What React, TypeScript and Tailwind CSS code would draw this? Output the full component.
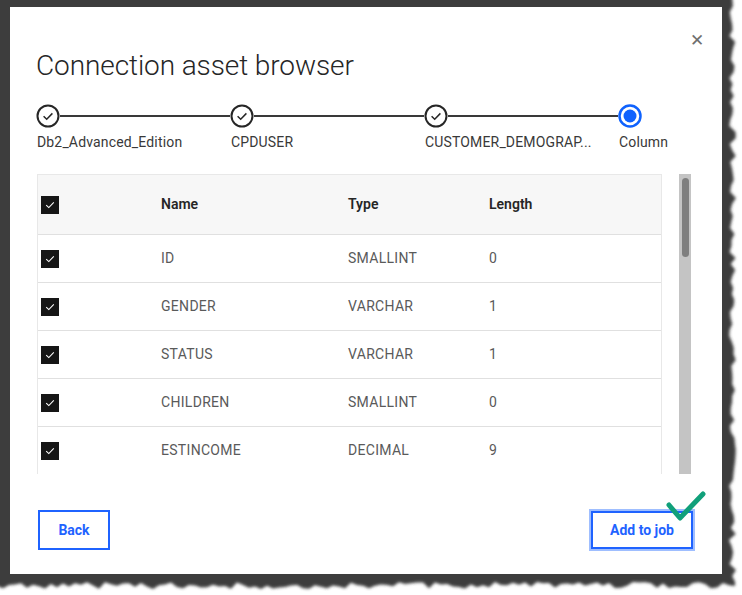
import React from "react";

function tornPath(): string {
  let seed = 7;
  const rnd = () => {
    seed = (seed * 9301 + 49297) % 233280;
    return seed / 233280;
  };
  const pts: string[] = [];
  pts.push("M -30 -30");
  pts.push("L 731 -30");
  for (let y = 0; y <= 582; y += 6) {
    const x = 729 + rnd() * 7;
    pts.push(`L ${x.toFixed(1)} ${y}`);
  }
  for (let x = 735; x >= -30; x -= 6) {
    const y = 582 + rnd() * 7;
    pts.push(`L ${x} ${y.toFixed(1)}`);
  }
  pts.push("Z");
  return pts.join(" ");
}

const TORN = tornPath();

function CheckedStep() {
  return (
    <svg width="24" height="24" viewBox="0 0 24 24" className="shrink-0">
      <circle cx="12" cy="12" r="10.5" fill="none" stroke="#262626" strokeWidth="2" />
      <path d="M7.6 12.2 L10.7 15.2 L16.4 9.4" fill="none" stroke="#262626" strokeWidth="1.5" />
    </svg>
  );
}

function CurrentStep() {
  return (
    <svg width="24" height="24" viewBox="0 0 24 24" className="shrink-0">
      <circle cx="12" cy="12" r="10.5" fill="none" stroke="#0f62fe" strokeWidth="2.5" />
      <circle cx="12" cy="12" r="6.5" fill="#0f62fe" />
    </svg>
  );
}

function Checkbox() {
  return (
    <div className="w-[18px] h-[18px] bg-[#161616] flex items-center justify-center">
      <svg width="10" height="8" viewBox="0 0 10 8">
        <path d="M1.2 4.2 L3.8 6.6 L8.8 1.4" fill="none" stroke="#ffffff" strokeWidth="1.1" />
      </svg>
    </div>
  );
}

const rows = [
  ["ID", "SMALLINT", "0"],
  ["GENDER", "VARCHAR", "1"],
  ["STATUS", "VARCHAR", "1"],
  ["CHILDREN", "SMALLINT", "0"],
  ["ESTINCOME", "DECIMAL", "9"],
];

const steps = ["Db2_Advanced_Edition", "CPDUSER", "CUSTOMER_DEMOGRAP...", "Column"];

export default function App() {
  const font = { fontFamily: "Roboto, 'Noto Sans', sans-serif" };
  return (
    <div className="relative w-[742px] h-[595px] bg-white overflow-hidden" style={font}>
      <svg className="absolute left-0 top-0" width="742" height="595">
        <defs>
          <filter id="blur" x="-10%" y="-10%" width="120%" height="120%">
            <feGaussianBlur stdDeviation="1.6" />
          </filter>
        </defs>
        <path d={TORN} fill="#3c3c3c" filter="url(#blur)" />
      </svg>

      <div className="relative ml-[10px] mt-[7px] w-[712px] h-[567px] bg-white">
        <div className="flex items-start justify-between pl-[26px] pr-[18px] pt-[41px]">
          <h1 className="text-[28px] leading-[36px] font-light text-[#262626] tracking-[-0.1px]">
            Connection asset browser
          </h1>
          <span className="text-[17px] leading-none text-[#6f6f6f] -mt-[16px]">✕</span>
        </div>

        <div className="flex pl-[26px] mt-[20px]">
          {steps.map((s, i) => (
            <div key={s} className="flex flex-col w-[194px] shrink-0">
              <div className="flex items-center">
                {i < 3 ? <CheckedStep /> : <CurrentStep />}
                {i < 3 && <div className="flex-1 h-[2px] bg-[#393939]" />}
              </div>
              <div className="mt-[5px] pl-[1px] text-[14px] leading-[18px] text-[#393939] tracking-[0.16px]">{s}</div>
            </div>
          ))}
        </div>

        <div className="flex mt-[23px] pl-[27px]">
          <div className="w-[625px] h-[300px] overflow-hidden border-l border-t border-r border-[#e8e8e8]">
            <div className="h-[60px] bg-[#f7f7f7] flex items-center border-b border-[#e0e0e0] text-[14px] font-semibold text-[#262626]">
              <div className="w-[123px] pl-[3px]"><Checkbox /></div>
              <div className="w-[187px]">Name</div>
              <div className="w-[141px]">Type</div>
              <div>Length</div>
            </div>
            {rows.map((r) => (
              <div key={r[0]} className="h-[48px] flex items-center border-b border-[#e0e0e0] text-[14px] text-[#5a5a5a] tracking-[0.3px]">
                <div className="w-[123px] pl-[3px]"><Checkbox /></div>
                <div className="w-[187px]">{r[0]}</div>
                <div className="w-[141px]">{r[1]}</div>
                <div>{r[2]}</div>
              </div>
            ))}
          </div>
          <div className="ml-[17px] w-[12px] h-[300px] bg-[#c4c4c4] flex justify-center pt-[4px]">
            <div className="w-[7px] h-[79px] rounded-full bg-[#7e7e7e]" />
          </div>
        </div>

        <div className="flex justify-between items-center pl-[28px] pr-[29px] mt-[36px]">
          <button className="w-[72px] h-[40px] border-2 border-[#1f63ff] text-[#1f63ff] text-[14px] font-bold">
            Back
          </button>
          <div className="relative">
            <button className="w-[102px] h-[38px] border-2 border-[#1f63ff] text-[#1f63ff] text-[14px] font-bold shadow-[0_0_0_2px_#9fbeff]">
              Add to job
            </button>
            <svg className="absolute left-[74px] -top-[22px]" width="44" height="40" viewBox="0 0 44 40">
              <path d="M4 16 L15 29 L38 5" fill="none" stroke="#10a07a" strokeWidth="5" strokeLinecap="round" strokeLinejoin="round" />
            </svg>
          </div>
        </div>
      </div>
    </div>
  );
}
